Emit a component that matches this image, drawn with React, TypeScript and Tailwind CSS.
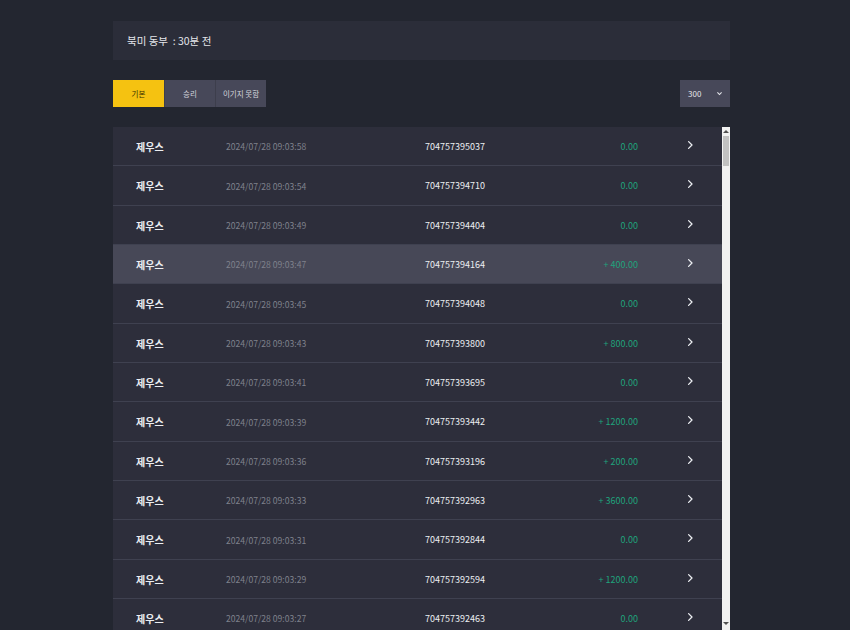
import { useState } from 'react'

type Row = {
	name: string
	time: string
	id: string
	amount: number
}

const rows: Row[] = [
	{ name: '제우스', time: '2024/07/28 09:03:58', id: '704757395037', amount: 0 },
	{ name: '제우스', time: '2024/07/28 09:03:54', id: '704757394710', amount: 0 },
	{ name: '제우스', time: '2024/07/28 09:03:49', id: '704757394404', amount: 0 },
	{ name: '제우스', time: '2024/07/28 09:03:47', id: '704757394164', amount: 400 },
	{ name: '제우스', time: '2024/07/28 09:03:45', id: '704757394048', amount: 0 },
	{ name: '제우스', time: '2024/07/28 09:03:43', id: '704757393800', amount: 800 },
	{ name: '제우스', time: '2024/07/28 09:03:41', id: '704757393695', amount: 0 },
	{ name: '제우스', time: '2024/07/28 09:03:39', id: '704757393442', amount: 1200 },
	{ name: '제우스', time: '2024/07/28 09:03:36', id: '704757393196', amount: 200 },
	{ name: '제우스', time: '2024/07/28 09:03:33', id: '704757392963', amount: 3600 },
	{ name: '제우스', time: '2024/07/28 09:03:31', id: '704757392844', amount: 0 },
	{ name: '제우스', time: '2024/07/28 09:03:29', id: '704757392594', amount: 1200 },
	{ name: '제우스', time: '2024/07/28 09:03:27', id: '704757392463', amount: 0 },
]

const tabs = ['기본', '승리', '이기지 못함']

function Chevron({ className }: { className?: string }) {
	return (
		<svg viewBox="0 0 10 10" className={className} fill="none" stroke="currentColor" strokeWidth="1.3" strokeLinecap="round" strokeLinejoin="round">
			<path d="M3.6 1.6 L7 5 L3.6 8.4" />
		</svg>
	)
}

export default function App() {
	const [tab, setTab] = useState(0)
	const hovered = 3

	return (
		<div className="h-[630px] overflow-hidden bg-[#232630] font-['Noto_Sans_CJK_KR','Noto_Sans',sans-serif]">
			<div className="w-[617px] pt-[21px] ml-[113px]">

				{/* 서버 상태 */}
				<div className="flex h-[39px] items-center bg-[#2b2d39] px-[14px] text-[10.5px] text-[#e4e5ea]">
					북미 동부 &nbsp;: 30분 전
				</div>

				{/* 탭 + 선택 */}
				<div className="mt-[20px] flex items-center justify-between">
					<div className="flex">
						{tabs.map((t, i) => (
							<button
								key={t}
								onClick={() => setTab(i)}
								className={
									i === tab
										? 'flex h-[27px] w-[51px] items-center justify-center bg-[#f5c211] text-[7.5px] text-[#3a3000]'
										: 'flex h-[27px] w-[51px] items-center justify-center border-l border-[#3d3e4c] bg-[#474859] text-[7.5px] text-[#d4d5dc]'
								}
							>
								{t}
							</button>
						))}
					</div>
					<div className="flex h-[27px] w-[50px] items-center justify-between bg-[#474859] pl-[8px] pr-[7px] text-[8px] text-[#e4e5ea]">
						<span>300</span>
						<svg viewBox="0 0 10 10" className="h-[7px] w-[7px]" fill="none" stroke="currentColor" strokeWidth="1.6">
							<path d="M2 3.5 L5 6.5 L8 3.5" />
						</svg>
					</div>
				</div>

				{/* 목록 */}
				<div className="mt-[20px] flex h-[510px]">
					<div className="flex-1 overflow-hidden">
						{rows.map((r, i) => (
							<div
								key={r.id}
								className={
									(i === hovered ? 'bg-[#474857] ' : 'bg-[#2d2e3b] ') +
									'flex h-[39.33px] items-center border-b border-[#3f4150] pt-[1px] text-[9px]'
								}
							>
								<span className="w-[113px] pl-[23px] text-[10px] font-semibold text-[#eceef2]">{r.name}</span>
								<span className="w-[199px] text-[8.6px] text-[#7f818c]">{r.time}</span>
								<span className="w-[100px] text-[#eceef2]">{r.id}</span>
								<span className="w-[113px] text-right text-[#1fa37c]">
									{r.amount > 0 ? `+ ${r.amount}.00` : '0.00'}
								</span>
								<span className="ml-[47px] -mt-[3px] text-[#eceef2]">
									<Chevron className="h-[10px] w-[10px]" />
								</span>
							</div>
						))}
					</div>

					{/* 스크롤바 */}
					<div className="flex w-[8px] flex-col items-center bg-[#f1f1f1]">
						<div className="mt-[3px] h-0 w-0 border-x-[3px] border-b-[3px] border-x-transparent border-b-[#505050]" />
						<div className="mt-[3px] h-[30px] w-[6px] bg-[#c1c1c1]" />
						<div className="flex-1" />
						<div className="mb-[12px] h-0 w-0 border-x-[3px] border-t-[3px] border-x-transparent border-t-[#505050]" />
					</div>
				</div>
			</div>
		</div>
	)
}
